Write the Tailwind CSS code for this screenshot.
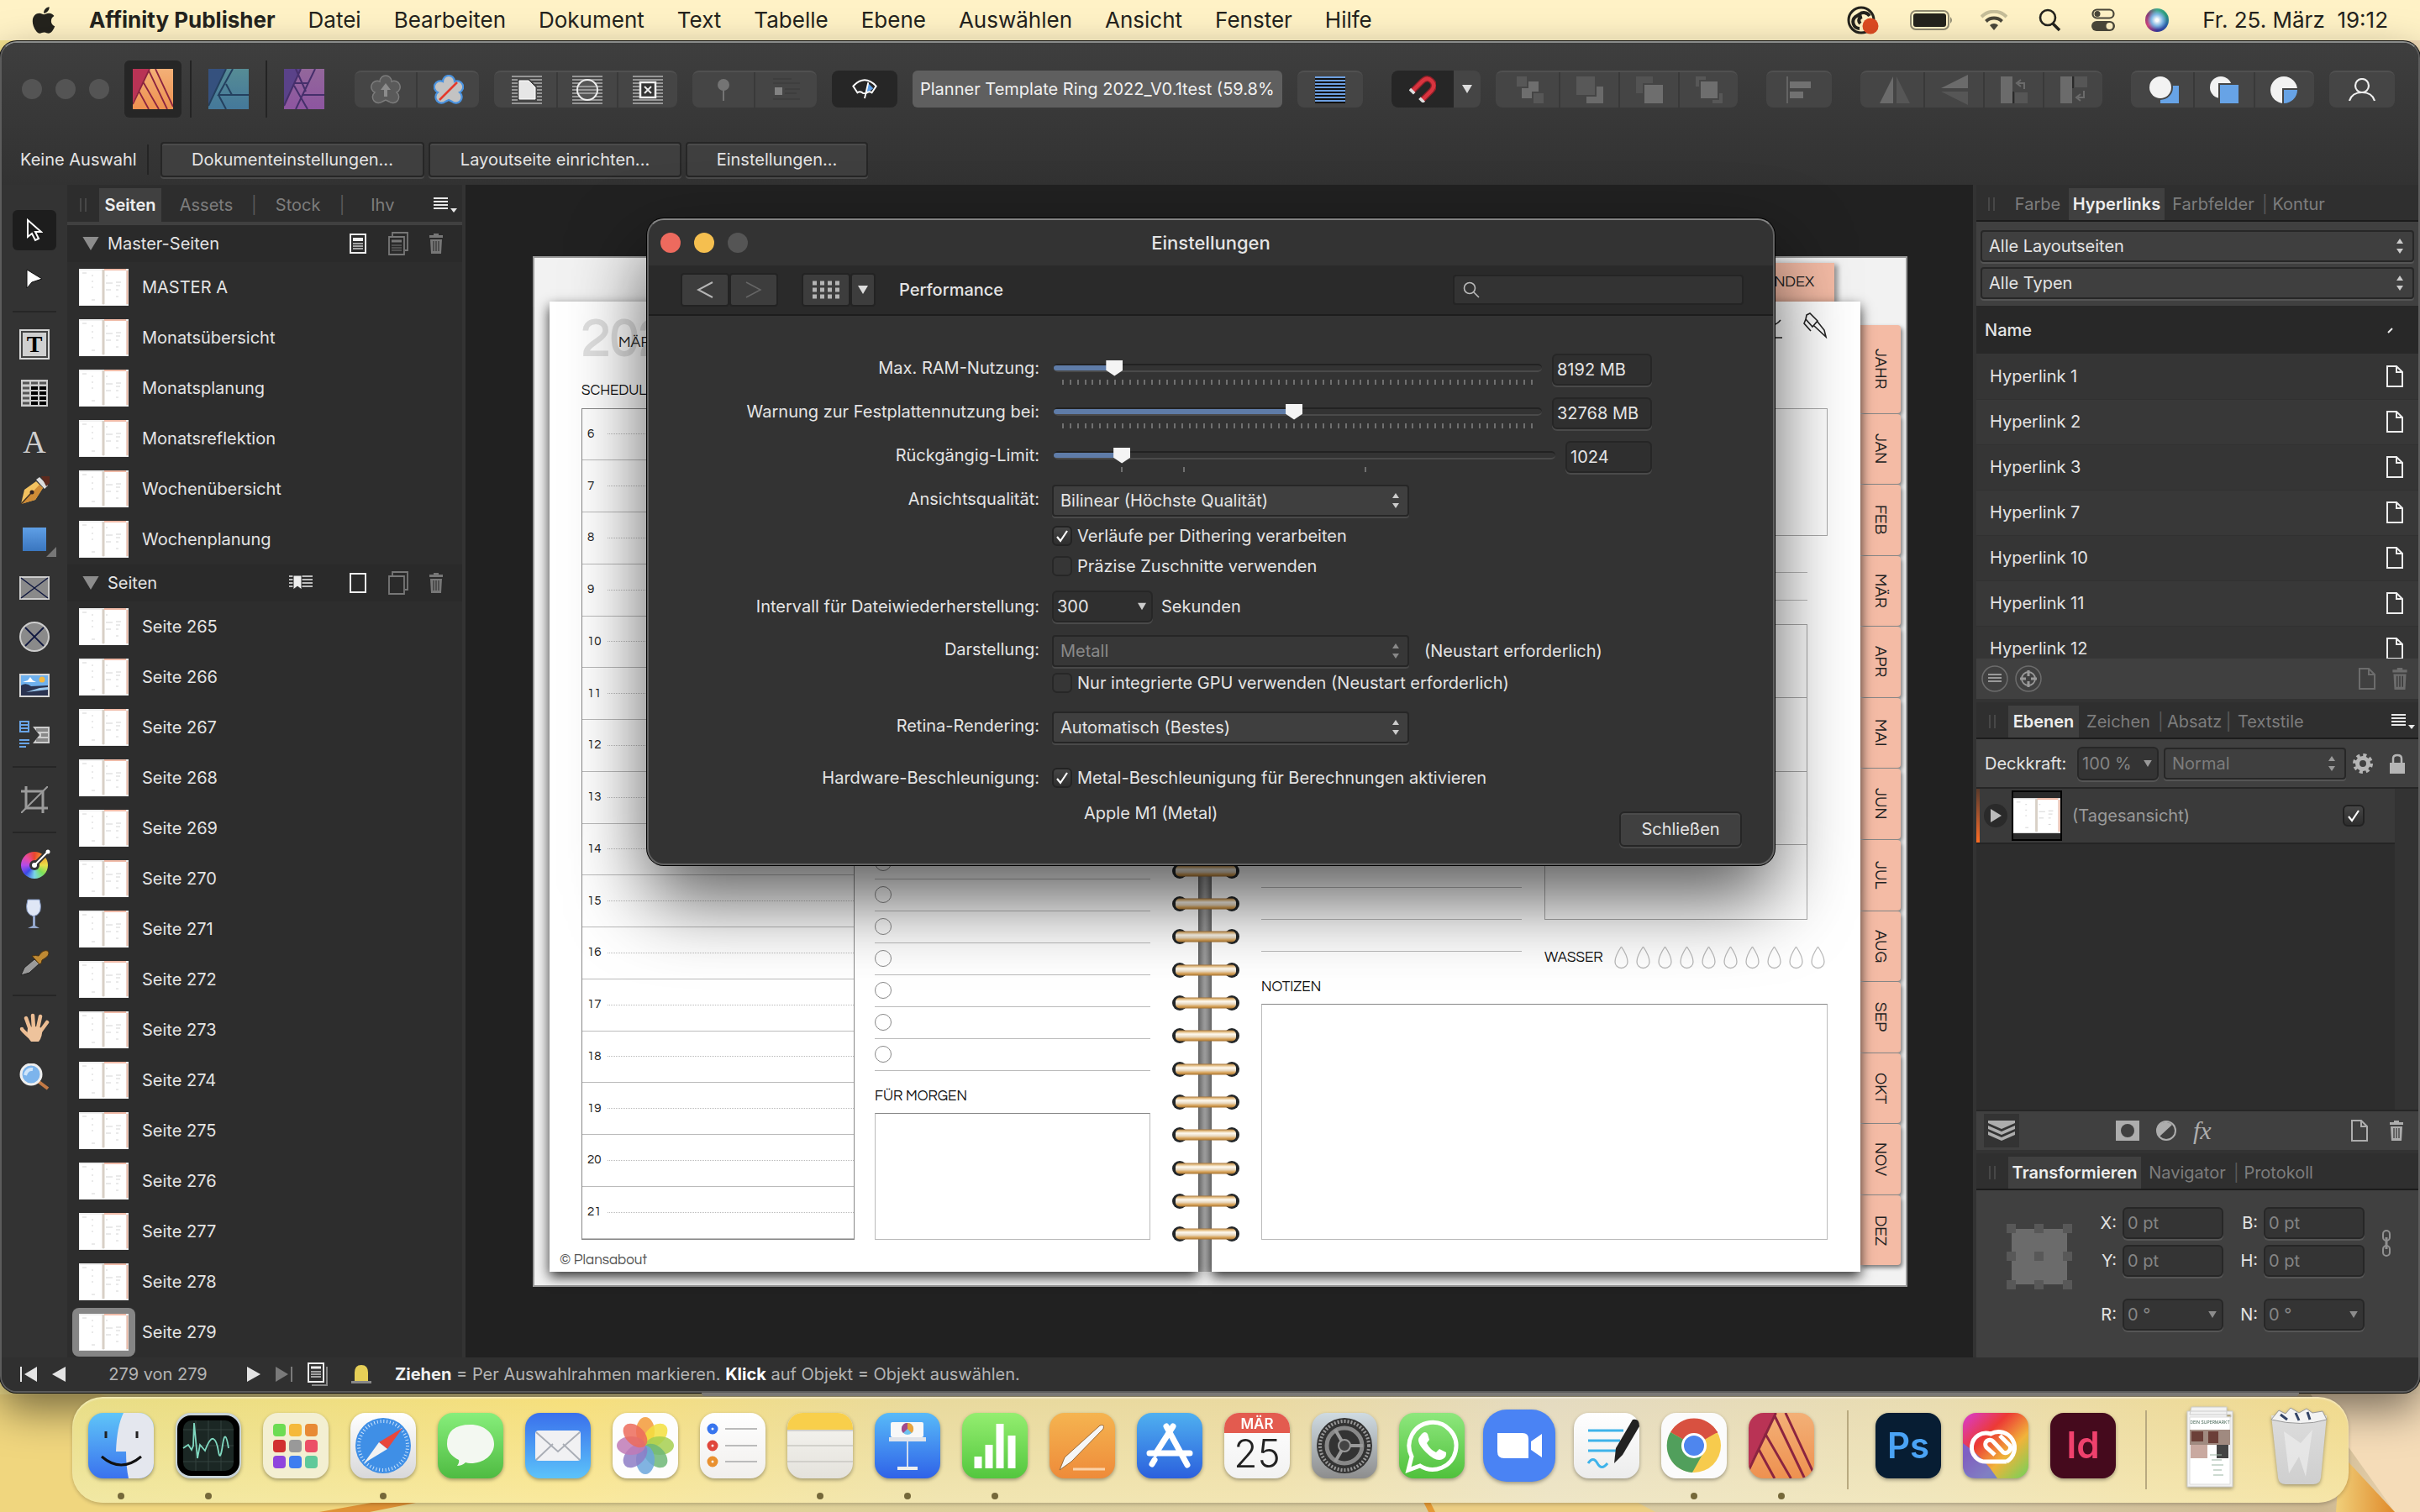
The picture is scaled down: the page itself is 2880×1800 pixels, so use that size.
<!DOCTYPE html>
<html lang="de">
<head>
<meta charset="utf-8">
<title>Affinity Publisher – Einstellungen</title>
<script src="https://cdn.jsdelivr.net/npm/@tailwindcss/browser@4"></script>
</head>
<body class="relative flex min-h-screen w-full flex-col overflow-x-hidden bg-[linear-gradient(to_right,#f6e38f_0%,#e9d98c_8%,#ddcf9c_40%,#d9cba6_80%,#cdb891_96%,#f3dcb8_100%)] font-['Inter',sans-serif] text-[20px] leading-7 text-[#e4e4e4]">

<!-- Shared symbols -->
<svg class="absolute h-0 w-0" aria-hidden="true">
  <defs>
    <linearGradient id="pubO" x1="0" y1="0" x2="0" y2="1"><stop offset="0" stop-color="#f3b077"/><stop offset="1" stop-color="#ee9150"/></linearGradient>
    <linearGradient id="desG" x1="0" y1="0" x2="0" y2="1"><stop offset="0" stop-color="#568c95"/><stop offset="1" stop-color="#44789a"/></linearGradient>
    <linearGradient id="phoG" x1="0" y1="0" x2="0" y2="1"><stop offset="0" stop-color="#93679b"/><stop offset="1" stop-color="#8d55a0"/></linearGradient>
    <linearGradient id="gold" x1="0" y1="0" x2="0" y2="1"><stop offset="0" stop-color="#a8763a"/><stop offset=".15" stop-color="#e2bd84"/><stop offset=".35" stop-color="#fffaf0"/><stop offset=".6" stop-color="#e9d9c0"/><stop offset=".8" stop-color="#d9a55c"/><stop offset="1" stop-color="#a5722f"/></linearGradient>
    <linearGradient id="dune" x1="0" y1="0" x2="1" y2="0"><stop offset="0" stop-color="#f0cf7a"/><stop offset="1" stop-color="#e08a2a"/></linearGradient>
  </defs>
  <symbol id="publisher" viewBox="0 0 48 48">
    <rect width="48" height="48" fill="url(#pubO)"/><path d="M0 0H20L0 40Z" fill="#b93355"/>
    <path d="M20 0 0 42M19 2 41 48M27 0 48 45M12 15 31 48M7 26 19 48" stroke="#8b2440" stroke-width="1.8" fill="none"/>
  </symbol>
  <symbol id="thumb" viewBox="0 0 59 44">
    <rect width="59" height="44" fill="#efefef"/><rect x="1" y="2" width="27" height="41" fill="#fff"/><rect x="30" y="2" width="26" height="41" fill="#fff"/>
    <rect x="27.500" y="1" width="3" height="41" fill="#d8d0c6"/><rect x="30" y="0" width="26" height="2" fill="#f0bba8"/><rect x="56.500" y="2" width="2" height="40" fill="#eab9a6"/>
    <path d="M4 5h5M15 8h2M15 15h2M15 22h2M15 37h4M32 8h2M32 17h8M32 25h6M44 16h6M44 20h5M44 25h3M44 33h3" stroke="#c9c9c9" stroke-width=".8"/>
  </symbol>
  <symbol id="trash" viewBox="0 0 18 26"><path d="M6 1h6v2h5v3H1V3h5zM2 8h14l-1 17H3z" fill="currentColor"/><path d="M6 10v12M9 10v12M12 10v12" stroke="#333" stroke-width="1.200"/></symbol>
  <symbol id="page" viewBox="0 0 22 28"><path d="M2 2h11l7 7v17H2zM13 2v7h7" fill="none" stroke="currentColor" stroke-width="2"/></symbol>
  <symbol id="updown" viewBox="0 0 10 22"><path d="M1 8 5 2 9 8ZM1 14 5 20 9 14Z" fill="currentColor"/></symbol>
  <symbol id="down" viewBox="0 0 12 10"><path d="M0 0H12L6 10Z" fill="currentColor"/></symbol>
  <symbol id="tick" viewBox="0 0 16 18"><path d="M2 10 6 15 14 3" fill="none" stroke="#fff" stroke-width="2.200"/></symbol>
  <symbol id="menu" viewBox="0 0 28 20"><path d="M0 2h17M0 6h17M0 10h17M0 14h17" stroke="#e8e8e8" stroke-width="2"/><path d="M20 14h8l-4 5z" fill="#e8e8e8"/></symbol>
  <symbol id="grip" viewBox="0 0 10 18"><path d="M2 1v16M8 1v16" stroke="#505050" stroke-width="1.500"/></symbol>
</svg>

<!-- Desktop picture, visible round the dock -->
<svg class="absolute inset-x-0 bottom-0 h-[140px] w-full" viewBox="0 0 2880 140" preserveAspectRatio="none" aria-hidden="true">
  <path d="M0 0H120L480 120 415 140H0z" fill="#f0d67e"/><path d="M380 140 470 124 520 124 440 140z" fill="#df9236"/>
  <path d="M1690 120h20l20 20h-30z" fill="#e59a35"/><path d="M1700 124h240l30 16h-262z" fill="#ecce84"/>
  <path d="M2750 0h130v140h-30z" fill="#f5dcb8"/><path d="M2785 70 2850 140H2780z" fill="url(#dune)"/>
</svg>

<!-- Menu bar -->
<header class="relative flex h-12 shrink-0 items-center bg-[#fff2c6] px-[38px] text-[26px] text-[#24231d]">
  <svg class="mr-10 h-9 w-7" viewBox="0 0 384 512" fill="#24231d"><path d="M318.700 268.700c-.2-36.700 16.400-64.400 50-84.800-18.800-26.900-47.200-41.700-84.700-44.600-35.500-2.800-74.300 20.700-88.500 20.700-15 0-49.400-19.700-76.400-19.700C63.300 141.200 4 184.800 4 273.500q0 39.300 14.400 81.200c12.800 36.700 59 126.700 107.200 125.200 25.200-.6 43-17.900 75.800-17.900 31.800 0 48.300 17.900 76.400 17.900 48.600-.7 90.400-82.500 102.600-119.300-65.200-30.700-61.700-90-61.700-91.900zm-56.600-164.200c27.300-32.400 24.800-61.900 24-72.500-24.100 1.400-52 16.400-67.900 34.900-17.500 19.800-27.800 44.300-25.600 71.900 26.100 2 49.900-11.400 69.500-34.300z"/></svg>
  <nav class="flex items-center gap-[39px]">
    <a href="#" class="font-bold">Affinity Publisher</a><a href="#">Datei</a><a href="#">Bearbeiten</a><a href="#">Dokument</a><a href="#">Text</a><a href="#">Tabelle</a><a href="#">Ebene</a><a href="#">Auswählen</a><a href="#">Ansicht</a><a href="#">Fenster</a><a href="#">Hilfe</a>
  </nav>
  <div class="ml-auto flex items-center">
    <svg class="mr-9 h-9 w-11" viewBox="0 0 44 36" fill="none"><circle cx="22" cy="18" r="15" fill="#fff2c6" stroke="#24231d" stroke-width="3"/><path d="M20 28a8 8 0 0 1-5-14l5-3a8 8 0 0 1 12 2M21 22c-3-3-2-7 2-8" stroke="#24231d" stroke-width="4"/><circle cx="33" cy="25" r="9.500" fill="#dd4b22"/></svg>
    <svg class="mr-8 h-6 w-[52px]" viewBox="0 0 52 24"><rect x="1" y="1" width="45" height="22" rx="6" fill="none" stroke="#8f8a72" stroke-width="2"/><rect x="4" y="4" width="39" height="16" rx="3" fill="#24231d"/><path d="M48 8q4 4 0 8z" fill="#8f8a72"/></svg>
    <svg class="mr-9 h-6 w-8" viewBox="0 0 32 24" fill="none"><path d="M1 8a21 21 0 0 1 30 0" stroke="#c5bd99" stroke-width="4"/><path d="M6.500 13.500a13.500 13.500 0 0 1 19 0" stroke="#4a473a" stroke-width="4"/><path d="m11 18 5 6 5-6a7 7 0 0 0-10 0" fill="#4a473a"/></svg>
    <svg class="mr-9 h-7 w-7" viewBox="0 0 28 28" fill="none" stroke="#24231d"><circle cx="12" cy="11" r="9" stroke-width="2.600"/><path d="m18 18 8 8" stroke-width="3.500"/></svg>
    <svg class="mr-9 h-7 w-7" viewBox="0 0 28 28"><rect x="1.500" y="1.500" width="25" height="10" rx="5" fill="none" stroke="#4a473a" stroke-width="2.200"/><circle cx="7" cy="6.500" r="3.500" fill="#4a473a"/><rect y="15" width="28" height="12" rx="6" fill="#4a473a"/><circle cx="21.500" cy="21" r="4" fill="#fff2c6"/></svg>
    <span class="mr-10 h-7 w-7 rounded-full bg-[radial-gradient(circle_at_50%_50%,#ffffff_8%,#7fb8e6_35%,transparent_60%),conic-gradient(#3fa98c,#2a9a7a,#2b5fae,#39379c,#d2457d,#8d3c78,#3fa98c)]"></span>
    <time class="whitespace-pre">Fr. 25. März  19:12</time>
  </div>
</header>

<!-- Application window -->
<main class="relative mt-px shrink-0 overflow-hidden rounded-[20px] border-2 border-[#5c5c5c] border-t-[#8a8c8b] bg-[#333] shadow-[0_0_0_1px_#111,0_20px_50px_#00000080]">
  <div class="bg-linear-to-b from-[#3e3e3e] to-[#323232] pt-[21px] pb-[9px]">
    <div id="toolbar" class="flex h-[68px] items-center gap-[18px] pr-[28px] pl-6">
      <div class="flex items-center">
        <span class="h-6 w-6 rounded-full bg-[#545454]"></span><span class="ml-4 h-6 w-6 rounded-full bg-[#545454]"></span><span class="ml-4 h-6 w-6 rounded-full bg-[#545454]"></span>
        <button aria-label="Publisher" class="ml-[18px] flex h-[68px] w-[68px] items-center justify-center rounded-md bg-[#262626]"><svg class="h-12 w-12"><use href="#publisher"/></svg></button>
        <span class="mx-[10px] h-[68px] w-0.5 bg-[#242424]"></span>
        <button aria-label="Designer" class="flex w-[68px] justify-center"><svg class="h-12 w-12" viewBox="0 0 48 48"><rect width="48" height="48" fill="url(#desG)"/><path d="M0 0h21L0 44z" fill="#35517e"/><path d="M21 0 0 44M29 0 12 31h36M21 18l7 13M12 31l9 17" stroke="#24405f" stroke-width="2" fill="none"/></svg></button>
        <span class="mx-[10px] h-[68px] w-0.5 bg-[#242424]"></span>
        <button aria-label="Photo" class="flex w-[68px] justify-center"><svg class="h-12 w-12" viewBox="0 0 48 48"><rect width="48" height="48" fill="url(#phoG)"/><path d="M0 0h20L0 44z" fill="#5a4289"/><path d="M20 0 0 44M37 0 22 31h26M12 17h16M14 0l12 27M22 31 14 48M12 20l16 28" stroke="#452f6b" stroke-width="2" fill="none"/></svg></button>
      </div>
      <div class="ml-2 flex h-11 w-[148px] overflow-hidden rounded-lg border-t-2 border-[#505050] bg-[#454545] *:flex *:flex-1 *:items-center *:justify-center">
        <button aria-label="Standard"><svg class="h-9 w-9" viewBox="0 0 36 36"><path d="M18 1a7 7 0 0 1 7 7 7 7 0 0 1 6 13 7 7 0 0 1-9 11l-4-2-4 2a7 7 0 0 1-9-11A7 7 0 0 1 11 8a7 7 0 0 1 7-7" fill="#5a5a5a" stroke="#7c7c7c" stroke-width="1.500"/><path d="m18 10 6 8h-4v8h-4v-8h-4z" fill="#8c8c8c"/></svg></button>
        <button aria-label="Synchronisieren" class="border-l-2 border-[#393939]"><svg class="h-9 w-9" viewBox="0 0 36 36"><path d="M18 1a7 7 0 0 1 7 7 7 7 0 0 1 6 13 7 7 0 0 1-9 11l-4-2-4 2a7 7 0 0 1-9-11A7 7 0 0 1 11 8a7 7 0 0 1 7-7" fill="#c3c3c3" stroke="#4a93e0" stroke-width="2.200"/><path d="m28 9-21 21" stroke="#e5392b" stroke-width="2.500"/></svg></button>
      </div>
      <div class="flex h-11 w-[218px] overflow-hidden rounded-lg border-t-2 border-[#505050] bg-[#454545] pl-1 *:flex *:flex-1 *:items-center *:justify-center">
        <button aria-label="Textumfluss"><svg class="h-9 w-9" viewBox="0 0 36 36"><path d="M0 2h36M0 6h36M0 10h36M0 14h36M0 18h36M0 22h36M0 26h36M0 30h36M0 34h36" stroke="#969696" stroke-width="2"/><path d="M7 5h14l9 9v17H7z" fill="#454545"/><path d="M9 7h11l8 8v14H9z" fill="#e6e6e6" stroke="#fff"/></svg></button>
        <button aria-label="Kontur umfließen" class="border-l-2 border-[#393939]"><svg class="h-9 w-9" viewBox="0 0 36 36"><path d="M0 2h36M0 6h36M0 10h36M0 14h36M0 18h36M0 22h36M0 26h36M0 30h36M0 34h36" stroke="#969696" stroke-width="2"/><circle cx="18" cy="18" r="12" fill="#555" stroke="#eee" stroke-width="2"/><path d="M8 14h20M7 18h22M8 22h20" stroke="#969696" stroke-width="2"/></svg></button>
        <button aria-label="Kein Umfluss" class="border-l-2 border-[#393939]"><svg class="h-9 w-9" viewBox="0 0 36 36"><path d="M0 2h36M0 6h36M0 10h36M0 14h36M0 18h36M0 22h36M0 26h36M0 30h36M0 34h36" stroke="#969696" stroke-width="2"/><rect x="9" y="9" width="18" height="18" fill="#333" stroke="#eee" stroke-width="2.500"/><path d="m14 14 8 8m0-8-8 8" stroke="#eee" stroke-width="2"/></svg></button>
      </div>
      <div class="flex h-11 w-[148px] overflow-hidden rounded-lg border-t-2 border-[#505050] bg-[#454545] *:flex *:flex-1 *:items-center *:justify-center">
        <button aria-label="Anker"><svg class="h-7 w-5" viewBox="0 0 20 28"><circle cx="10" cy="8" r="7" fill="#747474"/><path d="M10 14v13" stroke="#747474" stroke-width="2"/></svg></button>
        <button aria-label="Inline" class="border-l-2 border-[#393939]"><svg class="h-8 w-8" viewBox="0 0 32 32"><path d="M0 3h22M0 8h32M14 15h18M14 20h14M0 27h32" stroke="#3e3e3e" stroke-width="2"/><rect x="2" y="13" width="9" height="9" fill="#828282"/></svg></button>
      </div>
      <button aria-label="Vorschau" class="flex h-11 w-[78px] items-center justify-center rounded-lg bg-[#262626]"><svg class="h-6 w-8" viewBox="0 0 36 28" fill="none"><path d="m20 18 3-12 7 7-5 4z" fill="#5fa0e8"/><path d="M2 10q16-17 32 0l-6 9q-4-3-8 1h-4q-4-4-8-1zM18 27l5-22" stroke="#fff" stroke-width="2.200"/></svg></button>
      <div class="h-11 min-w-0 flex-1 rounded-md bg-[#5f5f5f] px-[9px] leading-[44px] whitespace-nowrap text-[#f0f0f0]">Planner Template Ring 2022_V0.1test (59.8%</div>
      <button aria-label="Grundlinienraster" class="flex h-11 w-[78px] items-center justify-center rounded-lg border-t-2 border-[#505050] bg-[#454545]"><svg class="h-8 w-9" viewBox="0 0 36 32"><path d="M0 3h36M0 7h36M0 11h36M0 15h36M0 19h36M0 23h36M0 27h36M0 31h36" stroke="#111" stroke-width="2"/><path d="M0 1h36M0 5h36M0 9h36M0 13h36M0 17h36M0 21h36M0 25h36M0 29h36" stroke="#6d9fe0" stroke-width="2"/></svg></button>
      <div class="ml-4 flex h-11 overflow-hidden rounded-lg bg-[#454545]">
        <button aria-label="Magnet" class="flex w-[74px] items-center justify-center bg-[#262626]"><svg class="h-8 w-8" viewBox="0 0 36 36" fill="none"><path d="M4 21 17 8Q24 1 30 7t0 13L17 33" stroke="#8e2028" stroke-width="8"/><path d="M4 21 17 8Q24 1 30 7t0 13L17 33" stroke="#d8343f" stroke-width="5"/><path d="m1 18 6 6M14 30l6 6" stroke="#ddd" stroke-width="4"/></svg></button>
        <button aria-label="Magnetoptionen" class="flex w-8 items-center justify-center text-[#ddd]"><svg class="h-2.5 w-3"><use href="#down"/></svg></button>
      </div>
      <div class="flex h-11 w-[288px] overflow-hidden rounded-lg border-t-2 border-[#505050] bg-[#454545] pl-[6px] *:flex *:flex-1 *:items-center *:justify-center">
        <button aria-label="Nach hinten"><svg class="h-8 w-8" viewBox="0 0 32 32"><path d="M0 0h12v12H0zM20 20h12v12H20z" fill="#575757"/><path d="M6 14V26h12V18h8V6H14v8z" fill="#6e6e6e"/></svg></button>
        <button aria-label="Eins nach hinten" class="border-l-2 border-[#393939]"><svg class="h-8 w-8" viewBox="0 0 32 32"><path d="M0 0h22v22H0z" fill="#585858"/><path d="M24 12h8v20H12v-8h12z" fill="#6a6a6a"/></svg></button>
        <button aria-label="Eins nach vorne" class="border-l-2 border-[#393939]"><svg class="h-8 w-8" viewBox="0 0 32 32"><path d="M0 0h20v8H8v12H0z" fill="#535353"/><path d="M10 10h22v22H10z" fill="#6e6e6e"/></svg></button>
        <button aria-label="Nach vorne" class="border-l-2 border-[#393939]"><svg class="h-8 w-8" viewBox="0 0 32 32"><path d="M0 0h12v4H4v8H0zM28 20h4v12H20v-4h8z" fill="#575757"/><path d="M6 6h20v20H6z" fill="#6e6e6e"/></svg></button>
      </div>
      <button aria-label="Ausrichten" class="ml-4 flex h-11 w-[78px] items-center justify-center rounded-lg border-t-2 border-[#505050] bg-[#454545]"><svg class="h-8 w-8" viewBox="0 0 32 32"><path d="M2 0v32" stroke="#636363" stroke-width="2"/><path d="M5 6h25v8H5zM5 18h16v8H5z" fill="#717171"/></svg></button>
      <div class="ml-4 flex h-11 w-[288px] overflow-hidden rounded-lg border-t-2 border-[#505050] bg-[#454545] pl-[6px] *:flex *:flex-1 *:items-center *:justify-center">
        <button aria-label="Horizontal spiegeln"><svg class="h-8 w-9" viewBox="0 0 36 32"><path d="M16 0v32H0z" fill="#6b6b6b"/><path d="M20 0v32h16z" fill="#565656"/></svg></button>
        <button aria-label="Vertikal spiegeln" class="border-l-2 border-[#393939]"><svg class="h-9 w-8" viewBox="0 0 32 36"><path d="M32 0v16H0z" fill="#6b6b6b"/><path d="M32 36V20H0z" fill="#565656"/></svg></button>
        <button aria-label="Links drehen" class="border-l-2 border-[#393939]"><svg class="h-8 w-8" viewBox="0 0 32 32"><path d="M0 0h14v32H0z" fill="#6b6b6b"/><path d="M17 19h15v13H17z" fill="#565656"/><path d="M15 18v14" stroke="#222" stroke-width="1.500"/><path d="M28 15V8h-7M24 4l-5 4 5 4" fill="none" stroke="#6b6b6b" stroke-width="2"/></svg></button>
        <button aria-label="Rechts drehen" class="border-l-2 border-[#393939]"><svg class="h-8 w-8" viewBox="0 0 32 32"><path d="M0 0h14v32H0z" fill="#6b6b6b"/><path d="M17 0h15v13H17z" fill="#565656"/><path d="M15 0v14" stroke="#222" stroke-width="1.500"/><path d="M28 17v8h-7M24 21l-5 4 5 4" fill="none" stroke="#6b6b6b" stroke-width="2"/></svg></button>
      </div>
      <div class="ml-4 flex h-11 w-[218px] overflow-hidden rounded-lg border-t-2 border-[#505050] bg-[#454545] pl-1 *:flex *:flex-1 *:items-center *:justify-center">
        <button aria-label="Addieren"><svg class="h-8 w-9" viewBox="0 0 36 32"><path d="M14 11h22v21H14z" fill="#67a3e6"/><circle cx="14" cy="13" r="15" fill="#454545"/><circle cx="14" cy="13" r="13" fill="#f2f2f2"/></svg></button>
        <button aria-label="Subtrahieren" class="border-l-2 border-[#393939]"><svg class="h-8 w-9" viewBox="0 0 36 32"><circle cx="14" cy="13" r="13" fill="#f2f2f2"/><path d="M11 8h24v24H11z" fill="#454545"/><path d="M13 10h22v22H13z" fill="#67a3e6"/></svg></button>
        <button aria-label="Schneiden" class="border-l-2 border-[#393939]"><svg class="h-8 w-9" viewBox="0 0 36 32"><circle cx="17" cy="16" r="16" fill="#f2f2f2"/><path d="M15 14h21v18H15z" fill="#454545"/><path d="M17 16h16a16 16 0 0 1-16 16z" fill="#67a3e6"/></svg></button>
      </div>
      <button aria-label="Konto" class="flex h-11 w-[78px] items-center justify-center rounded-lg border-t-2 border-[#505050] bg-[#454545]"><svg class="h-7 w-8" viewBox="0 0 32 28" fill="none" stroke="#eee" stroke-width="2.200"><circle cx="16" cy="9" r="8"/><path d="M1 27q3-10 15-10t15 10"/></svg></button>
    </div>
    <div class="mt-[29px] flex h-[42px] items-center">
      <span class="w-[149px] pl-[22px] whitespace-nowrap">Keine Auswahl</span>
      <span class="mr-[14px] ml-6 h-9 w-0.5 bg-[#242424]"></span>
      <div class="flex gap-[5px] *:h-[42px] *:rounded-sm *:border-2 *:border-[#262626] *:bg-[#3f3f3f] *:text-center *:shadow-[0_2px_0_#4a4a4a,inset_0_2px_0_#4b4b4b]">
        <button class="w-[314px]">Dokumenteinstellungen...</button><button class="w-[301px]">Layoutseite einrichten...</button><button class="w-[217px]">Einstellungen...</button>
      </div>
    </div>
  </div>

  <div class="flex">
    <!-- Tool strip -->
    <aside class="w-[78px] shrink-0 bg-[#333] pt-[25px]">
      <div class="flex flex-col items-center *:flex *:h-[58px] *:w-[52px] *:shrink-0 *:items-center *:justify-center">
        <button aria-label="Verschieben"><span class="flex h-12 w-[52px] items-center justify-center rounded-md bg-[#1d1d1d]"><svg class="h-7 w-5" viewBox="0 0 20 28"><path d="M2 2v20l5-4 4 8 4-2-4-8h7z" fill="#1d1d1d" stroke="#fff" stroke-width="2"/></svg></span></button>
        <button aria-label="Knoten"><svg class="h-6 w-5" viewBox="0 0 20 24"><path d="M1 1v22l6-7 12-4z" fill="#fff" stroke="#111"/></svg></button>
        <div class="!h-[20px]"><span class="h-0.5 w-full bg-[#262626]"></span></div>
        <button aria-label="Textrahmen"><span class="flex h-9 w-9 items-center justify-center border-2 border-[#d8d8d8] bg-[#444]"><span class="flex h-7 w-7 items-center justify-center bg-[#d0d0d0] font-['Liberation_Serif',serif] text-[28px] font-bold text-black">T</span></span></button>
        <button aria-label="Tabelle"><svg class="h-8 w-8" viewBox="0 0 32 32"><path d="M0 0h32v32H0z" fill="#ccc"/><path d="M2 4h8M12 4h8M22 4h8M2 10h8M2 16h8M2 22h8M2 28h8" stroke="#555" stroke-width="3"/><path d="M12 10h8M22 10h8M12 16h8M22 16h8M12 22h8M22 22h8M12 28h8M22 28h8" stroke="#000" stroke-width="4"/></svg></button>
        <button aria-label="Grafiktext" class="font-['Liberation_Serif',serif] text-[38px] text-[#cfcfcf]">A</button>
        <button aria-label="Zeichenstift"><svg class="h-9 w-9" viewBox="0 0 36 36"><path d="M2 34 6 17 20 7l8 8-9 14z" fill="#f3c260"/><path d="m2 34 17-5 9-14-4-4z" fill="#cf8b36"/><path d="m2 34 12-13" stroke="#432" stroke-width="1.500"/><circle cx="15" cy="20" r="2.500" fill="#322"/><path d="m20 5 10 11 4-4L24 2z" fill="#ddd"/><path d="M26 1h10v8l-4 4z" fill="#5c2a1e"/></svg></button>
        <button aria-label="Rechteck" class="relative"><span class="h-7 w-7 bg-linear-to-b from-[#5f9fe6] to-[#3a76bf]"></span><svg class="absolute right-0 bottom-2 h-3 w-3" viewBox="0 0 12 12"><path d="M12 0v12H0z" fill="#777"/></svg></button>
        <button aria-label="Bildrahmen rechteckig"><svg class="h-7 w-9" viewBox="0 0 36 28"><path d="M1 1h34v26H1z" fill="#8a8a8a" stroke="#ccc" stroke-width="2"/><path d="m2 2 32 24m0-24L2 26" stroke="#101840" stroke-width="1.500"/></svg></button>
        <button aria-label="Bildrahmen elliptisch"><svg class="h-9 w-9" viewBox="0 0 36 36"><circle cx="18" cy="18" r="17" fill="#8a8a8a" stroke="#ccc" stroke-width="2"/><path d="m7 7 22 22m0-22L7 29" stroke="#101840" stroke-width="1.800"/></svg></button>
        <button aria-label="Bild platzieren"><svg class="h-7 w-9" viewBox="0 0 36 28"><path d="M1 1h34v26H1z" fill="#6fb1ee" stroke="#d8d8d8" stroke-width="2"/><path d="M2 14q6-4 12 1l20-1v12H2z" fill="#2a3350"/><path d="m8 22 16-5 10-1v3z" fill="#9cc9ee"/><path d="m4 10 6-2 3-4 3 4 4 2z" fill="#fff"/><circle cx="27" cy="7" r="3.500" fill="#f4b942"/></svg></button>
        <button aria-label="Datenmerge"><svg class="h-8 w-9" viewBox="0 0 36 32"><path d="M1 1h10v12H1zM1 5h10M1 9h10M0 23h12M0 27h12M0 31h8" fill="none" stroke="#69a5e8" stroke-width="2"/><path d="M16 7h20v20H16l8-10z" fill="#ccc"/><path d="M20 11h14M26 17h8M20 23h14" stroke="#888" stroke-width="4"/></svg></button>
        <div class="!h-[20px]"><span class="h-0.5 w-full bg-[#262626]"></span></div>
        <button aria-label="Vektorzuschnitt"><svg class="h-8 w-8" viewBox="0 0 32 32" fill="none" stroke="#9b9b9b" stroke-width="3"><path d="M6 0v26h26M0 6h26v26"/><path d="M0 32 32 0" stroke-width="2"/></svg></button>
        <div class="!h-[20px]"><span class="h-0.5 w-full bg-[#262626]"></span></div>
        <button aria-label="Füllung"><span class="relative h-8 w-8 rounded-full bg-[conic-gradient(#e8452f,#f2a02b,#e8e04a,#7be05a,#7ad6e8,#3a4be8,#b44be8,#e84ba0,#e8452f)]"><span class="absolute top-[10px] left-[10px] h-3 w-3 rounded-full bg-[#333]"></span><svg class="absolute -top-1 left-[12px] h-6 w-6" viewBox="0 0 24 24"><path d="M4 20 20 4" stroke="#333" stroke-width="6"/><path d="M4 20 20 4" stroke="#fff" stroke-width="2"/><circle cx="4" cy="20" r="3" fill="#fff"/><circle cx="20" cy="4" r="2.500" fill="#fff"/></svg></span></button>
        <button aria-label="Transparenz"><svg class="h-9 w-6" viewBox="0 0 24 36"><path d="M4 1h14q5 17-7 20Q-1 18 4 1" fill="#dfe6f5" stroke="#7e93bd"/><path d="M10 21h3v11l5 3H4l6-3z" fill="#93a6cc"/></svg></button>
        <button aria-label="Pipette"><svg class="h-8 w-9" viewBox="0 0 36 32"><path d="m2 31 4-9 12-10 6 5-12 11z" fill="#9a9a9a" stroke="#222"/><path d="M15 8q5-1 8 0 5-8 11-6 4 5-7 11 0 4-3 5z" fill="#c08a33" stroke="#4a3210"/></svg></button>
        <div class="!h-[20px]"><span class="h-0.5 w-full bg-[#262626]"></span></div>
        <button aria-label="Hand"><svg class="h-9 w-9" viewBox="0 0 36 36"><path d="M12 28Q3 20 3 19M13 20 8 6M17 18 16 3M22 18l3-14M25 22l8-11" stroke="#ecbd93" stroke-width="4.500" stroke-linecap="round" fill="none"/><path d="M10 18q8-4 17 0 1 10-4 16h-9q-6-6-4-16" fill="#eec39c"/></svg></button>
        <button aria-label="Zoom"><svg class="h-8 w-9" viewBox="0 0 36 32"><path d="m22 21 12 9" stroke="#c47a45" stroke-width="4"/><circle cx="14" cy="13" r="12" fill="#7cb4ec" stroke="#eee" stroke-width="3"/><path d="M7 14q2-8 9-7" stroke="#cfe5fa" stroke-width="4" fill="none"/></svg></button>
      </div>
    </aside>

    <!-- Pages panel -->
    <section class="w-[474px] shrink-0 border-r-4 border-[#333] bg-[#2d2d2d]">
      <div class="flex h-[48px] items-end border-b-4 border-[#404040] bg-[#2d2d2d] pt-1 text-[#7d7d7d] *:flex *:h-full *:items-center">
        <span class="w-[38px] justify-center"><svg class="h-[18px] w-2.5"><use href="#grip"/></svg></span>
        <button class="w-[74px] justify-center bg-[#404040] font-semibold text-[#eee]">Seiten</button>
        <button class="w-[107px] justify-center">Assets</button><span class="text-[#5a5a5a]">|</span>
        <button class="w-[98px] justify-center">Stock</button><span class="text-[#5a5a5a]">|</span>
        <button class="w-[90px] justify-center">Ihv</button>
        <button aria-label="Menü" class="ml-auto pr-[6px]"><svg class="h-5 w-7"><use href="#menu"/></svg></button>
      </div>
      <div class="flex h-11 items-center bg-[#2a2a2a] pr-[22px] pl-[18px]">
        <svg class="h-4 w-5 text-[#8c8c8c]" ><use href="#down"/></svg><span class="ml-2.5">Master-Seiten</span>
        <button aria-label="Neuer Master" class="ml-auto"><svg class="h-6 w-5" viewBox="0 0 20 24"><path d="M1 1h18v22H1z" fill="none" stroke="#eee" stroke-width="2"/><path d="M4 7h12" stroke="#eee" stroke-width="4"/><path d="M4 12h12M4 15h12M4 18h12" stroke="#ccc" stroke-width="1.500"/></svg></button>
        <button aria-label="Duplizieren" class="ml-[26px]"><svg class="h-7 w-6" viewBox="0 0 24 28" fill="none" stroke="#777"><path d="M1 6h18v21H1zM5 5V1h18v21h-3" stroke-width="1.800"/><path d="M4 11h12" stroke-width="3"/><path d="M4 16h12M4 19h12M4 22h12"/></svg></button>
        <button aria-label="Löschen" class="ml-6 text-[#777]"><svg class="h-[26px] w-[18px]"><use href="#trash"/></svg></button>
      </div>
      <ul id="masters"></ul>
      <div class="flex h-11 items-center bg-[#2a2a2a] pr-[22px] pl-[18px]">
        <svg class="h-4 w-5 text-[#8c8c8c]"><use href="#down"/></svg><span class="ml-2.5">Seiten</span>
        <button aria-label="Abschnitte" class="ml-auto"><svg class="h-5 w-7" viewBox="0 0 28 20"><path d="M0 2h28M0 6h28M0 10h28M0 14h28" stroke="#bbb" stroke-width="1.800"/><path d="M5 1h10v17l-5-4-5 4z" fill="#eee" stroke="#2a2a2a"/></svg></button>
        <button aria-label="Neue Seite" class="ml-11"><svg class="h-6 w-5" viewBox="0 0 20 24"><path d="M1 1h18v22H1z" fill="none" stroke="#eee" stroke-width="2"/></svg></button>
        <button aria-label="Duplizieren" class="ml-[26px]"><svg class="h-7 w-6" viewBox="0 0 24 28" fill="none" stroke="#777" stroke-width="1.800"><path d="M1 6h18v21H1zM5 5V1h18v21h-3"/></svg></button>
        <button aria-label="Löschen" class="ml-6 text-[#777]"><svg class="h-[26px] w-[18px]"><use href="#trash"/></svg></button>
      </div>
      <ul id="pages"></ul>
    </section>

    <!-- Canvas -->
    <section class="flex min-w-0 flex-1 items-center justify-center overflow-hidden bg-[#212121] pl-0.5 text-[#222]">
      <div class="relative flex h-[1227px] w-[1636px] shrink-0 border-2 border-[#999] bg-[#f2f2f2] pt-[52px] pl-[18px] font-['Questrial','Inter',sans-serif] text-[17px] leading-5">
        <div class="absolute top-[6px] right-[85px] h-12 w-[128px] bg-[#f4bba5] pr-6 text-right text-[18px] leading-[46px] shadow-[4px_2px_6px_#00000066]">INDEX</div>
        <!-- Left page -->
        <div class="relative h-[1155px] w-[772px] bg-white pl-[38px] shadow-[0_6px_14px_#000000cc]">
          <div class="flex h-[127px] flex-col justify-between pt-4 pb-[11px]">
            <div class="text-[62px] leading-[58px] font-extrabold text-[#e0e0e0]">2022</div>
            <div class="font-semibold text-[#111]">SCHEDULE</div>
          </div>
          <span class="absolute top-[39px] left-[82px] text-[18px]">MÄRZ</span>
          <div class="flex gap-6">
            <div id="hours" class="grid h-[990px] w-[325px] grid-rows-16 border border-[#888]"></div>
            <div class="flex h-[990px] w-[328px] flex-col justify-end">
              <div id="todos"></div>
              <h3 class="pt-5 pb-2.5 font-medium text-[#111]">FÜR MORGEN</h3>
              <div class="h-[151px] border border-[#bbb] border-t-[#888]"></div>
            </div>
          </div>
          <div class="mt-[14px] -ml-[26px] text-[17px] text-[#555]">© Plansabout</div>
        </div>
        <!-- Spine -->
        <div class="h-[1155px] w-4 bg-linear-to-r from-[#a3a3a3] via-[#c4c4c4] to-[#a3a3a3]"></div>
        <!-- Right page -->
        <div class="relative h-[1155px] w-[772px] bg-white pr-[39px] pl-[59px] shadow-[0_6px_14px_#000000cc]">
          <div class="flex h-[127px] items-start justify-end pt-3">
            <svg class="h-8 w-20" viewBox="0 0 80 32" fill="none" stroke="#222" stroke-width="1.600"><path d="M6 8q8 14 18 2M10 31h16"/><path d="m55 4 4-2 9 9-6 7-8-9zM64 17l14 13-2-8-8-10M54 9l-2 5 8 9"/></svg>
          </div>
          <div class="h-[152px] border border-[#aaa]"></div>
          <div class="flex h-[457px] justify-between pr-6">
            <div class="flex w-[310px] flex-col justify-end *:h-[38px] *:border-b *:border-[#bbb]"><div></div><div></div><div></div></div>
            <div class="w-[313px]">
              <div class="h-11 border-b border-[#bbb]"></div><div class="h-[33px] border-b border-[#bbb]"></div>
              <div class="mt-7 grid h-[352px] grid-rows-4 border border-[#aaa] *:border-b *:border-[#aaa]"><div></div><div></div><div></div></div>
            </div>
          </div>
          <div class="flex h-[90px]">
            <div class="h-[38px] w-[310px] border-b border-[#bbb]"></div>
            <div class="ml-[27px] flex h-[90px] items-center gap-[12px] font-medium whitespace-nowrap text-[#111]">WASSER <div id="drops" class="flex gap-[7px]"></div></div>
          </div>
          <h3 class="-mt-[20px] h-[30px] font-medium text-[#111]">NOTIZEN</h3>
          <div class="h-[281px] border border-[#bbb] border-t-[#888]"></div>
        </div>
        <!-- Month tabs -->
        <div id="tabs" class="mt-[28px] flex h-[1120px] w-12 flex-col gap-px"></div>
        <!-- Ring binding -->
        <div id="rings" class="absolute top-[710px] left-[759px] flex h-[472px] w-20 flex-col justify-between"></div>
      </div>
    </section>

    <!-- Right panels -->
    <aside class="w-[530px] shrink-0 border-l-4 border-[#333] bg-[#404040]">
      <div class="flex h-11 border-b-2 border-[#1c1c1c] bg-[#2f2f2f] pt-1 text-[#7d7d7d] *:flex *:items-center">
        <span class="w-9 justify-center"><svg class="h-[18px] w-2.5"><use href="#grip"/></svg></span>
        <button class="w-[74px] justify-center">Farbe</button>
        <button class="w-[114px] justify-center bg-[#404040] font-semibold text-[#eee]">Hyperlinks</button>
        <button class="w-[116px] justify-center">Farbfelder</button><span class="text-[#5a5a5a]">|</span><button class="w-[74px] justify-center">Kontur</button>
      </div>
      <div class="flex flex-col gap-[6px] px-[5px] pt-[10px] pb-2">
        <div class="relative"><select aria-label="Seitenfilter" class="h-[38px] w-full appearance-none rounded-sm border-2 border-[#272727] bg-[#3f3f3f] px-2 shadow-[0_2px_0_#555]"><option>Alle Layoutseiten</option></select><svg class="pointer-events-none absolute top-2 right-3 h-[22px] w-2.5 text-[#ccc]"><use href="#updown"/></svg></div>
        <div class="relative"><select aria-label="Typfilter" class="h-[38px] w-full appearance-none rounded-sm border-2 border-[#272727] bg-[#3f3f3f] px-2 shadow-[0_2px_0_#555]"><option>Alle Typen</option></select><svg class="pointer-events-none absolute top-2 right-3 h-[22px] w-2.5 text-[#ccc]"><use href="#updown"/></svg></div>
      </div>
      <div class="h-[420px] overflow-hidden bg-[#333]">
        <table class="w-full border-collapse">
          <thead><tr class="h-[57px] bg-[#282828]"><th class="pl-[10px] text-left font-medium">Name</th><th class="w-14"><svg class="ml-4 h-3 w-3" viewBox="0 0 12 12"><path d="m4 9 5-5" stroke="#eee" stroke-width="2"/></svg></th></tr></thead>
          <tbody id="links"></tbody>
        </table>
      </div>
      <div class="flex h-[52px] items-center border-b-4 border-[#333] px-[6px] text-[#6c6c6c]">
        <button aria-label="Liste"><svg class="h-8 w-8" viewBox="0 0 32 32" fill="none" stroke="currentColor"><circle cx="16" cy="16" r="15" stroke-width="1.500"/><path d="M8 11h16M8 15h16M8 19h16" stroke="#999" stroke-width="1.800"/></svg></button>
        <button aria-label="Ziel" class="ml-2"><svg class="h-8 w-8" viewBox="0 0 32 32" fill="none" stroke="currentColor"><circle cx="16" cy="16" r="15" stroke-width="1.500"/><circle cx="16" cy="16" r="8" stroke="#999" stroke-width="1.800"/><path d="M16 6v7M16 19v7M6 16h7M19 16h7" stroke="#999" stroke-width="3"/></svg></button>
        <button aria-label="Neu" class="ml-auto"><svg class="h-7 w-[22px]"><use href="#page"/></svg></button>
        <button aria-label="Löschen" class="mr-[6px] ml-[18px]"><svg class="h-7 w-5"><use href="#trash"/></svg></button>
      </div>

      <div class="flex h-11 border-b-2 border-[#1c1c1c] bg-[#2f2f2f] pt-1 text-[#7d7d7d] *:flex *:items-center">
        <span class="w-[38px] justify-center"><svg class="h-[18px] w-2.5"><use href="#grip"/></svg></span>
        <button class="w-[84px] justify-center bg-[#404040] font-semibold text-[#eee]">Ebenen</button>
        <button class="w-[94px] justify-center">Zeichen</button><span class="text-[#5a5a5a]">|</span>
        <button class="w-[74px] justify-center">Absatz</button><span class="text-[#5a5a5a]">|</span>
        <button class="w-[94px] justify-center">Textstile</button>
        <button aria-label="Menü" class="ml-auto pr-1"><svg class="h-5 w-7"><use href="#menu"/></svg></button>
      </div>
      <div class="flex h-[59px] items-center border-b-2 border-[#262626] pr-4 pl-[10px]">
        <label for="opacity" class="w-[110px]">Deckkraft:</label>
        <div class="relative"><input id="opacity" value="100 %" class="h-10 w-[97px] rounded-md border-2 border-[#272727] bg-[#343434] pl-1 text-[#858585] shadow-[0_2px_0_#555]"><svg class="absolute top-4 right-2 h-2 w-2.5 text-[#999]"><use href="#down"/></svg></div>
        <div class="relative mr-2 ml-[6px] flex-1"><select aria-label="Mischmodus" class="h-[38px] w-full appearance-none rounded-sm border-2 border-[#272727] bg-[#3f3f3f] px-2 text-[#7d7d7d] shadow-[0_2px_0_#555]"><option>Normal</option></select><svg class="pointer-events-none absolute top-2 right-3 h-[22px] w-2.5 text-[#999]"><use href="#updown"/></svg></div>
        <button aria-label="Optionen"><svg class="h-6 w-6" viewBox="0 0 24 24"><circle cx="12" cy="12" r="6.500" fill="none" stroke="#b5b5b5" stroke-width="5"/><circle cx="12" cy="12" r="10" fill="none" stroke="#b5b5b5" stroke-width="4" stroke-dasharray="4 3.850"/></svg></button>
        <button aria-label="Sperren" class="ml-5"><svg class="h-6 w-[18px]" viewBox="0 0 18 24"><path d="M0 11h18v13H0z" fill="#b5b5b5"/><path d="M4 11V6q0-4 5-4t5 4v5" fill="none" stroke="#b5b5b5" stroke-width="2.500"/></svg></button>
      </div>
      <div class="h-[384px] border-b-2 border-[#262626] bg-[#333] pr-7">
        <div class="h-full bg-[#2d2d2d]">
          <div class="flex h-[66px] items-center border-b-2 border-[#242424] bg-[#3a3a3a]">
            <span class="h-full w-1 bg-linear-to-b from-[#5a3a2a] to-[#ff6d22]"></span>
            <button aria-label="Aufklappen" class="ml-[5px] flex h-7 w-7 items-center justify-center rounded-full bg-[#2a2a2a]"><svg class="h-4 w-4" viewBox="0 0 16 16"><path d="M2 0v16l13-8z" fill="#bbb"/></svg></button>
            <span class="ml-[5px] flex h-[60px] w-[60px] items-center justify-center border-2 border-black bg-[#2a2a2a]"><svg class="h-[42px] w-14"><use href="#thumb"/></svg></span>
            <label for="layer" class="ml-3 text-[#9a9a9a]">(Tagesansicht)</label>
            <span class="relative mr-9 ml-auto flex"><input id="layer" type="checkbox" checked class="peer h-[26px] w-[26px] appearance-none rounded-md border-2 border-[#222] bg-linear-to-b from-[#474747] to-[#2d2d2d]"><svg class="pointer-events-none absolute top-1 left-[5px] hidden h-[18px] w-4 peer-checked:block"><use href="#tick"/></svg></span>
          </div>
        </div>
      </div>
      <div class="flex h-[50px] items-center border-b-4 border-[#333] px-[9px] text-[#adadad]">
        <button aria-label="Ebenen" class="flex h-10 w-[42px] items-center justify-center bg-[#333]"><svg class="h-6 w-8" viewBox="0 0 32 24"><path d="M0 0h32v3L16 10 0 3zM0 6l16 7 16-7v4L16 17 0 10zM0 13l16 7 16-7v4l-16 7-16-7z" fill="#adadad"/></svg></button>
        <button aria-label="Maske" class="ml-[115px]"><svg class="h-6 w-7" viewBox="0 0 28 24"><path d="M0 0h28v24H0z" fill="#adadad"/><circle cx="14" cy="12" r="8" fill="#404040"/></svg></button>
        <button aria-label="Anpassung" class="ml-5"><svg class="h-6 w-6" viewBox="0 0 24 24"><circle cx="12" cy="12" r="11" fill="none" stroke="#adadad" stroke-width="2"/><path d="M19 5A10 10 0 0 0 4 19z" fill="#adadad"/></svg></button>
        <button aria-label="Effekte" class="ml-5 font-['Liberation_Serif',serif] text-[30px] italic">fx</button>
        <button aria-label="Neue Ebene" class="ml-auto"><svg class="h-7 w-[22px]"><use href="#page"/></svg></button>
        <button aria-label="Löschen" class="mr-2 ml-6"><svg class="h-[26px] w-[18px]"><use href="#trash"/></svg></button>
      </div>

      <div class="flex h-11 border-b-2 border-[#1c1c1c] bg-[#2f2f2f] pt-1 text-[#7d7d7d] *:flex *:items-center">
        <span class="w-[38px] justify-center"><svg class="h-[18px] w-2.5"><use href="#grip"/></svg></span>
        <button class="w-[158px] justify-center bg-[#404040] font-semibold text-[#eee]">Transformieren</button>
        <button class="w-[110px] justify-center">Navigator</button><span class="text-[#5a5a5a]">|</span><button class="w-[94px] justify-center">Protokoll</button>
      </div>
      <div class="flex h-[198px] pt-5 pl-[36px]">
        <svg class="mt-5 h-[78px] w-[78px]" viewBox="0 0 78 78"><rect x="6" y="6" width="66" height="66" fill="#6b6b6b"/><path d="M0 0h11v11H0zM33 0h11v11H33zM67 0h11v11H67zM0 33h11v11H0zM33 33h11v11H33zM67 33h11v11H67zM0 67h11v11H0zM33 67h11v11H33zM67 67h11v11H67z" fill="#585858"/></svg>
        <div id="transform" class="ml-5 grid grid-cols-[40px_120px_48px_120px] content-start items-center gap-y-[7px]"></div>
        <button aria-label="Verknüpfen" class="ml-5 flex h-[86px] items-center"><svg class="h-8 w-3" viewBox="0 0 12 32" fill="none" stroke="#909090" stroke-width="2"><rect x="2" y="1" width="8" height="12" rx="4"/><rect x="2" y="19" width="8" height="12" rx="4"/><path d="M6 9v14" stroke-width="3"/></svg></button>
      </div>
    </aside>
  </div>

  <!-- Status bar -->
  <footer class="flex h-10 items-center bg-[#303030] pl-[22px] text-[#b4b4b4]">
    <button aria-label="Erste"><svg class="h-5 w-5" viewBox="0 0 20 20" fill="#e4e4e4"><path d="M0 1h2v18H0zM20 1v18L5 10z"/></svg></button>
    <button aria-label="Zurück" class="ml-[18px]"><svg class="h-5 w-4" viewBox="0 0 16 20" fill="#e4e4e4"><path d="M16 1v18L0 10z"/></svg></button>
    <span class="w-[216px] pl-1 text-center">279 von 279</span>
    <button aria-label="Weiter"><svg class="h-5 w-4" viewBox="0 0 16 20" fill="#e4e4e4"><path d="M0 1v18l16-9z"/></svg></button>
    <button aria-label="Letzte" class="ml-[18px]"><svg class="h-5 w-5" viewBox="0 0 20 20" fill="#7a7a7a"><path d="M0 1v18l15-9zM18 1h2v18h-2z"/></svg></button>
    <svg class="ml-[18px] h-7 w-6" viewBox="0 0 24 28" fill="none"><path d="M5 27h18V5" stroke="#888" stroke-width="2"/><path d="M1 1h18v22H1z" stroke="#eee" stroke-width="2"/><path d="M4 6h12" stroke="#eee" stroke-width="3"/><path d="M4 11h12M4 14h12M4 17h12" stroke="#ccc" stroke-width="1.500"/></svg>
    <svg class="ml-7 h-6 w-6" viewBox="0 0 24 24"><path d="M4 20V10q0-9 8-9t8 9v10z" fill="#e6cf57"/><path d="M0 20h24v3H0z" fill="#888"/></svg>
    <p class="ml-7 whitespace-nowrap"><b class="text-[#eee]">Ziehen</b> = Per Auswahlrahmen markieren. <b class="text-white">Klick</b> auf Objekt = Objekt auswählen.</p>
  </footer>
</main>

<!-- Lower edge of the window behind -->
<div class="relative mr-[5%] ml-[29%] h-1 rounded-b-sm bg-[#7a7875]"></div>

<!-- Dock -->
<div class="relative mx-auto mt-px mb-[10px] flex w-max rounded-[36px] bg-[linear-gradient(to_bottom,#ffffff00,#fff8d066),linear-gradient(to_right,#e8dd86,#f6df7c_22%,#e8d99d_38%,#ead9a0_52%,#e4dac0_65%,#e9dcb0_82%,#f0d98c)] px-[6px] shadow-[inset_0_2px_2px_#fff6,0_2px_4px_#0003]">
  <ul id="dock" class="flex h-[126px] items-start"></ul>
</div>

<!-- Settings dialog -->
<section role="dialog" aria-label="Einstellungen" class="absolute top-[260px] left-1/2 w-[1342px] -translate-x-[670px] overflow-hidden rounded-[20px] border-2 border-t-[#858585] border-[#636363] bg-[#333] shadow-[0_0_0_1px_#000,0_40px_90px_#000000a6]">
  <div class="relative flex h-[54px] items-center gap-4 pl-[14px]">
    <button aria-label="Fenster schließen" class="h-6 w-6 rounded-full bg-[#ed6a5e]"></button><button aria-label="Minimieren" class="h-6 w-6 rounded-full bg-[#f5bf4f]"></button><span class="h-6 w-6 rounded-full bg-[#555]"></span>
    <h1 class="absolute inset-x-0 text-center text-[22px] font-medium">Einstellungen</h1>
  </div>
  <div class="flex h-[60px] items-center border-b-2 border-[#1d1d1d] bg-[#2a2a2a] pr-[35px] pl-[38px]">
    <div class="flex *:flex *:h-10 *:w-[58px] *:items-center *:justify-center *:rounded-sm *:border-2 *:border-[#232323] *:bg-[#3d3d3d]">
      <button aria-label="Zurück"><svg class="h-5 w-5" viewBox="0 0 20 20"><path d="M19 1 2 10l17 9" fill="none" stroke="#b5b5b5" stroke-width="2"/></svg></button>
      <button aria-label="Vor"><svg class="h-5 w-5" viewBox="0 0 20 20"><path d="m1 1 17 9-17 9" fill="none" stroke="#666" stroke-width="1.500"/></svg></button>
    </div>
    <div class="ml-7 flex *:flex *:h-10 *:items-center *:justify-center *:rounded-sm *:border-2 *:border-[#232323] *:bg-[#3d3d3d]">
      <button aria-label="Übersicht" class="w-[58px]"><svg class="h-6 w-8" viewBox="0 0 32 24"><path d="M0 4h32M0 12h32M0 20h32" stroke="#b5b5b5" stroke-width="5" stroke-dasharray="5 4"/></svg></button>
      <button aria-label="Bereiche" class="w-[30px] text-[#ddd]"><svg class="h-2.5 w-3"><use href="#down"/></svg></button>
    </div>
    <h2 class="ml-7 font-medium">Performance</h2>
    <div class="relative ml-auto"><input type="search" aria-label="Suchen" class="h-9 w-[346px] rounded-sm border-2 border-[#242424] bg-[#333] pl-9"><svg class="absolute top-2 left-3 h-5 w-5" viewBox="0 0 20 20" fill="none" stroke="#bbb" stroke-width="1.600"><circle cx="8" cy="8" r="6.500"/><path d="m13 13 6 6"/></svg></div>
  </div>

  <form class="pt-9 pb-5">
    <div class="grid grid-cols-[465px_1fr] items-center gap-x-[15px] [&>label]:text-right [&>span]:text-right">
      <label for="ram">Max. RAM-Nutzung:</label>
      <div class="flex h-[52px] items-center pl-0.5">
        <div class="relative h-5 w-[581px]"><div class="absolute inset-x-0 top-[5px] h-[10px] rounded-full border-t-2 border-b-2 border-t-[#222] border-b-[#4a4a4a] bg-[#333]"><div class="h-full rounded-l-full bg-[#5f7ca8]" style="width:12.500%"></div></div><input id="ram" type="range" min="1" max="64" value="8" class="absolute inset-0 w-full appearance-none bg-transparent [&::-webkit-slider-thumb]:h-[19px] [&::-webkit-slider-thumb]:w-5 [&::-webkit-slider-thumb]:appearance-none [&::-webkit-slider-thumb]:bg-[#f4f4f4] [&::-webkit-slider-thumb]:[clip-path:polygon(0_0,100%_0,100%_65%,50%_100%,0_65%)]"><div class="ticks absolute inset-x-[10px] top-[24px] flex justify-between"></div></div>
        <input aria-label="RAM-Wert" value="8192 MB" class="mt-1 ml-3 h-[38px] w-[119px] rounded-md border-2 border-[#262626] bg-[#2f2f2f] pl-1 shadow-[0_2px_0_#4a4a4a]">
      </div>
      <label for="disk">Warnung zur Festplattennutzung bei:</label>
      <div class="flex h-[52px] items-center pl-0.5">
        <div class="relative h-5 w-[581px]"><div class="absolute inset-x-0 top-[5px] h-[10px] rounded-full border-t-2 border-b-2 border-t-[#222] border-b-[#4a4a4a] bg-[#333]"><div class="h-full rounded-l-full bg-[#5f7ca8]" style="width:49%"></div></div><input id="disk" type="range" min="1" max="64" value="32" class="absolute inset-0 w-full appearance-none bg-transparent [&::-webkit-slider-thumb]:h-[19px] [&::-webkit-slider-thumb]:w-5 [&::-webkit-slider-thumb]:appearance-none [&::-webkit-slider-thumb]:bg-[#f4f4f4] [&::-webkit-slider-thumb]:[clip-path:polygon(0_0,100%_0,100%_65%,50%_100%,0_65%)]"><div class="ticks absolute inset-x-[10px] top-[24px] flex justify-between"></div></div>
        <input aria-label="Festplattenwert" value="32768 MB" class="mt-1 ml-3 h-[38px] w-[119px] rounded-md border-2 border-[#262626] bg-[#2f2f2f] pl-1 shadow-[0_2px_0_#4a4a4a]">
      </div>
      <label for="undo">Rückgängig-Limit:</label>
      <div class="flex h-[52px] items-center pl-0.5">
        <div class="relative h-5 w-[597px]"><div class="absolute inset-x-0 top-[5px] h-[10px] rounded-full border-t-2 border-b-2 border-t-[#222] border-b-[#4a4a4a] bg-[#333]"><div class="h-full rounded-l-full bg-[#5f7ca8]" style="width:13.500%"></div></div><input id="undo" type="range" min="0" max="8192" value="1010" class="absolute inset-0 w-full appearance-none bg-transparent [&::-webkit-slider-thumb]:h-[19px] [&::-webkit-slider-thumb]:w-5 [&::-webkit-slider-thumb]:appearance-none [&::-webkit-slider-thumb]:bg-[#f4f4f4] [&::-webkit-slider-thumb]:[clip-path:polygon(0_0,100%_0,100%_65%,50%_100%,0_65%)]"><div class="absolute inset-x-0 top-[24px] flex *:h-[6px] *:w-0.5 *:bg-[#6f6f6f]"><span class="ml-20"></span><span class="ml-[72px]"></span><span class="ml-[214px]"></span></div></div>
        <input aria-label="Rückgängig-Wert" value="1024" class="mt-1 ml-3 h-[38px] w-[103px] rounded-md border-2 border-[#262626] bg-[#2f2f2f] pl-1 shadow-[0_2px_0_#4a4a4a]">
      </div>
      <label for="quality">Ansichtsqualität:</label>
      <div class="flex h-[52px] items-center pt-1"><div class="relative w-[425px]"><select id="quality" class="h-[38px] w-full appearance-none rounded-sm border-2 border-[#262626] bg-[#3f3f3f] px-2 shadow-[0_2px_0_#4a4a4a]"><option>Bilinear (Höchste Qualität)</option></select><svg class="pointer-events-none absolute top-2 right-[11px] h-[22px] w-2.5 text-[#ccc]"><use href="#updown"/></svg></div></div>
      <span></span>
      <label class="flex h-9 items-center gap-[6px]"><span class="relative flex"><input type="checkbox" checked class="peer h-6 w-6 appearance-none rounded-md border-2 border-[#232323] bg-linear-to-b from-[#454545] to-[#2e2e2e]"><svg class="pointer-events-none absolute top-[3px] left-1 hidden h-[18px] w-4 peer-checked:block"><use href="#tick"/></svg></span>Verläufe per Dithering verarbeiten</label>
      <span></span>
      <label class="flex h-9 items-center gap-[6px]"><input type="checkbox" class="h-6 w-6 appearance-none rounded-md border-2 border-[#272727] bg-[#363636]">Präzise Zuschnitte verwenden</label>
      <label for="interval">Intervall für Dateiwiederherstellung:</label>
      <div class="flex h-[60px] items-center gap-[10px]"><div class="relative"><input id="interval" value="300" class="h-[38px] w-[120px] rounded-md border-2 border-[#262626] bg-[#2f2f2f] pl-1 shadow-[0_2px_0_#4a4a4a]"><svg class="absolute top-[14px] right-2 h-2.5 w-2.5 text-[#ccc]"><use href="#down"/></svg></div>Sekunden</div>
      <label for="display">Darstellung:</label>
      <div class="flex h-[42px] items-center gap-[18px] pt-1"><div class="relative w-[425px]"><select id="display" disabled class="h-[38px] w-full appearance-none rounded-sm border-2 border-[#262626] bg-[#373737] px-2 text-[#8a8a8a] shadow-[0_2px_0_#484848]"><option>Metall</option></select><svg class="pointer-events-none absolute top-2 right-[11px] h-[22px] w-2.5 text-[#888]"><use href="#updown"/></svg></div>(Neustart erforderlich)</div>
      <span></span>
      <label class="flex h-9 items-center gap-[6px] pt-0.5"><input type="checkbox" class="h-6 w-6 appearance-none rounded-md border-2 border-[#272727] bg-[#363636]">Nur integrierte GPU verwenden (Neustart erforderlich)</label>
      <label for="retina">Retina-Rendering:</label>
      <div class="flex h-[68px] items-center pt-1"><div class="relative w-[425px]"><select id="retina" class="h-[38px] w-full appearance-none rounded-sm border-2 border-[#262626] bg-[#3f3f3f] px-2 shadow-[0_2px_0_#4a4a4a]"><option>Automatisch (Bestes)</option></select><svg class="pointer-events-none absolute top-2 right-[11px] h-[22px] w-2.5 text-[#ccc]"><use href="#updown"/></svg></div></div>
      <label for="hw">Hardware-Beschleunigung:</label>
      <label class="flex h-14 items-center gap-[6px]"><span class="relative flex"><input id="hw" type="checkbox" checked class="peer h-6 w-6 appearance-none rounded-md border-2 border-[#232323] bg-linear-to-b from-[#454545] to-[#2e2e2e]"><svg class="pointer-events-none absolute top-[3px] left-1 hidden h-[18px] w-4 peer-checked:block"><use href="#tick"/></svg></span>Metal-Beschleunigung für Berechnungen aktivieren</label>
      <span></span>
      <div class="flex h-[54px] items-start justify-between pr-[37px] pl-[38px]"><span>Apple M1 (Metal)</span><button type="button" class="mt-3 h-[42px] w-[146px] rounded-md border-2 border-[#262626] bg-[#404040] shadow-[0_2px_0_#484848,inset_0_2px_0_#4b4b4b]">Schließen</button></div>
    </div>
  </form>
</section>

<script>
const fill = (id, html) => { document.getElementById(id).innerHTML = html; };
const row = (name, active) => `<li class="flex h-[60px] items-center pl-[6px]"><span class="flex h-[58px] w-[75px] items-center justify-center rounded-lg ${active ? 'bg-[#858585]' : ''}"><svg class="h-11 w-[59px]"><use href="#thumb"/></svg></span><span class="ml-2">${name}</span></li>`;
fill('masters', ['MASTER A','Monatsübersicht','Monatsplanung','Monatsreflektion','Wochenübersicht','Wochenplanung'].map(n => row(n)).join(''));
fill('pages', Array.from({length: 15}, (_, i) => row('Seite ' + (265 + i), i === 14)).join(''));
fill('hours', Array.from({length: 16}, (_, i) => `<div class="flex items-center border-b border-[#bbb] pl-[6px] text-[15px]"><span class="w-6">${6 + i}</span><span class="flex-1 border-b border-dotted border-[#bbb]"></span></div>`).join(''));
fill('todos', Array.from({length: 8}, () => `<div class="flex h-[38px] items-center border-b border-[#bbb]"><span class="h-5 w-5 rounded-full border border-[#888]"></span></div>`).join(''));
fill('drops', Array.from({length: 10}, () => `<svg class="h-7 w-[19px]" viewBox="0 0 19 28"><path d="M9.500 1Q17 12 17 19a7.500 7.500 0 0 1-15 0Q2 12 9.500 1" fill="none" stroke="#bbb" stroke-width="1.300"/></svg>`).join(''));
fill('tabs', ['JAHR','JAN','FEB','MÄR','APR','MAI','JUN','JUL','AUG','SEP','OKT','NOV','DEZ'].map((t, i) => `<div class="flex items-center justify-center rounded-r-sm bg-[#f4bba5] text-[19px] shadow-[2px_3px_5px_#00000080] ${i ? 'flex-1' : 'h-[105px]'}"><span class="[writing-mode:vertical-rl]">${t}</span></div>`).join(''));
fill('rings', Array.from({length: 12}, () => `<svg class="h-[39px] w-20" viewBox="0 0 80 39"><ellipse cx="9" cy="20" rx="9" ry="9" fill="#222629"/><ellipse cx="71" cy="20" rx="9" ry="9" fill="#222629"/><rect x="4" y="13.500" width="72" height="13" rx="5" fill="url(#gold)"/></svg>`).join(''));
fill('links', ['1','2','3','7','10','11','12'].map((n, i) => `<tr class="h-[54px] ${i % 2 ? 'bg-[#383838]' : 'bg-[#353535]'}"><td class="border-b border-[#313131] pl-4"><a href="#">Hyperlink ${n}</a></td><td class="border-b border-[#313131] pl-[17px] text-[#eee]"><svg class="h-7 w-[22px]"><use href="#page"/></svg></td></tr>`).join(''));
document.querySelectorAll('.ticks').forEach(t => { t.innerHTML = Array.from({length: 64}, () => '<span class="h-[6px] w-0.5 bg-[#6f6f6f]"></span>').join(''); });
fill('transform', [['X','0 pt'],['B','0 pt'],['Y','0 pt'],['H','0 pt'],['R','0 °'],['N','0 °']].map(([l, v], i) => `<label for="t${l}" class="pr-[7px] text-right ${i > 3 ? 'mt-[19px]' : ''}">${l}:</label><span class="relative flex ${i > 3 ? 'mt-[19px]' : ''}"><input id="t${l}" value="${v}" class="h-[38px] w-[120px] rounded-md border-2 border-[#272727] bg-[#343434] pl-1 text-[#858585] shadow-[0_2px_0_#555]">${i > 3 ? '<svg class="absolute top-[15px] right-2 h-2 w-2.5 text-[#8c8c8c]"><use href="#down"/></svg>' : ''}</span>`).join(''));

const G = (id, a, b) => `<linearGradient id="${id}" x1="0" y1="0" x2="0" y2="1"><stop offset="0" stop-color="${a}"/><stop offset="1" stop-color="${b}"/></linearGradient>`;
const bg = (id, a, b) => G(id, a, b) + `<rect width="78" height="78" rx="18" fill="url(#${id})"/>`;
const petals = ['#f39a38','#f3df3e','#a6cf50','#6db777','#6ba6dc','#8d7cc6','#c07ab6','#ec6b5a'].map((c, i) => `<ellipse cx="39" cy="22" rx="11" ry="17" fill="${c}" opacity=".85" transform="rotate(${i * 45} 39 39)"/>`).join('');
const pad = ['#6ddc52','#f5b93a','#e88a35','#d13030','#999','#ec4f66','#8f45dd','#3f7df0','#5fc99a'].map((c, i) => `<rect x="${12 + (i % 3) * 19}" y="${13 + Math.floor(i / 3) * 19}" width="15" height="15" rx="4" fill="${c}"/>`).join('');
const apps = [
  ['Finder', 1, bg('f1','#5fc5f8','#3a72ee') + '<path d="M42 0h18a18 18 0 0 1 18 18v42a18 18 0 0 1-18 18H48q-3-14-3-32H33Q34 16 42 0" fill="#e4e7ee"/><path d="M21 22v8M58 22v8" stroke="#222" stroke-width="3"/><path d="M16 52q23 20 47 0" fill="none" stroke="#111" stroke-width="3"/>'],
  ['Aktivitätsanzeige', 1, '<rect width="78" height="78" rx="18" fill="#c9d4d8"/><rect x="2" y="3" width="74" height="72" rx="16" fill="#000"/><rect x="9" y="9" width="60" height="60" rx="10" fill="#1b2724"/><path d="M9 20h60M9 39h60M9 58h60M24 9v60M39 9v60M54 9v60" stroke="#34433f"/><path d="M9 42l6-4 4 6 2-5 1-27 4 42 3-16 6 7q6-16 10-14t6 15 5-8 7 4" fill="none" stroke="#7fd8c0" stroke-width="1.800"/>'],
  ['Launchpad', 0, '<rect width="78" height="78" rx="18" fill="#f3efd2"/>' + pad],
  ['Safari', 1, bg('f4','#ffffff','#d8d8da') + '<circle cx="39" cy="39" r="33" fill="#3f8fe6"/><circle cx="39" cy="39" r="29" fill="none" stroke="#cfe4fb" stroke-width="4" stroke-dasharray="1 2.800"/><path d="m62 18-28 17 10 8z" fill="#e8473c"/><path d="M16 60 34 35l10 8z" fill="#f2f2f2"/>'],
  ['Nachrichten', 0, bg('f5','#87ee7b','#4fbb42') + '<path d="M39 14c16 0 28 10 28 23S55 60 39 60q-3 0-6-1-4 4-10 4 3-4 2-7-14-7-14-19 0-23 28-23" fill="#f3f8f1"/>'],
  ['Mail', 0, bg('f6','#3a70ec','#5cc3fa') + '<rect x="12" y="21" width="54" height="36" rx="4" fill="#f1f1f3"/><path d="m13 23 26 23 26-23M13 56l20-19M65 56 45 37" fill="none" stroke="#a9adb5" stroke-width="1.800"/>'],
  ['Fotos', 0, '<rect width="78" height="78" rx="18" fill="#fdfdfd"/>' + petals],
  ['Erinnerungen', 0, bg('f8','#ffffff','#f1efed') + '<path d="M30 19h38M30 39h38M30 58h38" stroke="#bbb" stroke-width="2"/><g fill="none" stroke-width="5"><circle cx="15" cy="19" r="4" stroke="#3875ee"/><circle cx="15" cy="39" r="4" stroke="#e0463c"/><circle cx="15" cy="58" r="4" stroke="#e9902f"/></g>'],
  ['Notizen', 1, bg('f9','#f7f6f2','#e4e2dc') + '<path d="M0 20V18A18 18 0 0 1 18 0h42a18 18 0 0 1 18 18v2z" fill="#f8cf4b"/><path d="M0 21h78M0 39h78M0 58h78" stroke="#c9c7c2" stroke-width="1.500"/>'],
  ['Keynote', 1, bg('f10','#58baf8','#2f62e8') + '<rect x="19" y="11" width="39" height="18" rx="2" fill="#f8f8f8"/><path d="M17 29h44v5H17z" fill="#dfe3ea"/><circle cx="39" cy="19" r="7" fill="#6ec1ee"/><path d="M39 19v-7a7 7 0 0 1 5 12z" fill="#e9a43c"/><path d="M39 19v-7a7 7 0 0 0-5 12z" fill="#a24a8c"/><path d="M39 34v32" stroke="#cfdcef" stroke-width="2"/><path d="M27 66h24" stroke="#eee" stroke-width="4"/>'],
  ['Numbers', 1, bg('f11','#94ee70','#53c73e') + '<path d="M19 66V52M32 66V38M45 66V13M59 66V27" stroke="#fff" stroke-width="9"/>'],
  ['Pages', 0, bg('f12','#f5b450','#ee8b3a') + '<path d="m12 68 6-15 42-38q6-2 4 4L26 58z" fill="#f6f6f6" stroke="#9a6a36"/><path d="M28 67h38" stroke="#fbd2a8" stroke-width="3"/>'],
  ['App Store', 0, bg('f13','#4fb0f0','#2b60dd') + '<path d="m43 16-21 33M35 16l25 46M21 56l-3 5M15 48h48" stroke="#fff" stroke-width="7" stroke-linecap="round"/>'],
  ['Kalender', 0, bg('f14','#ffffff','#f2f2f2') + '<path d="M0 24v-6A18 18 0 0 1 18 0h42a18 18 0 0 1 18 18v6z" fill="#e35b4f"/><text x="39" y="19" text-anchor="middle" font-size="17" font-weight="600" fill="#fff">MÄR</text><text x="39" y="65" text-anchor="middle" font-size="46" font-weight="300" fill="#222">25</text>'],
  ['Systemeinstellungen', 0, bg('f15','#cfdbe2','#8d8d8d') + '<circle cx="39" cy="39" r="33" fill="#333"/><circle cx="39" cy="39" r="29" fill="none" stroke="#999" stroke-width="4" stroke-dasharray="2 2"/><circle cx="39" cy="39" r="21" fill="none" stroke="#888" stroke-width="5"/><path d="M39 39h22M39 39 28 20M39 39 28 58" stroke="#999" stroke-width="4"/><circle cx="39" cy="39" r="7" fill="#444" stroke="#999" stroke-width="2"/>'],
  ['WhatsApp', 0, bg('f16','#8ee77d','#4fc13c') + '<path d="m11 68 4-16a28 28 0 1 1 10 11z" fill="none" stroke="#fff" stroke-width="5"/><path d="M27 25q4-4 7 0l2 7-3 4q4 8 11 11l4-4 8 4q1 5-4 8-8 4-20-8t-8-18z" fill="#fff"/>'],
  ['Zoom', 0, '<rect x="-4" y="-4" width="86" height="86" rx="28" fill="#4a83f4"/><path d="M13 24h30q7 0 7 7v23H21q-8 0-8-8zM53 34l13-9v28l-13-9z" fill="#fff"/>'],
  ['GoodNotes', 0, bg('f18','#ffffff','#ececec') + '<path d="M17 21h42M17 33h38M17 45h33M17 60q6-9 11 0t12 0" stroke="#3fb3ea" stroke-width="3" fill="none"/><path d="m48 60 2-18L70 8q8-2 8 8L58 50z" fill="#222"/>'],
  ['Chrome', 1, '<rect width="78" height="78" rx="18" fill="#fbfbfb"/><circle cx="39" cy="39" r="32" fill="#f7cb4d"/><path d="M39 39 11 23a32 32 0 0 1 56 0z" fill="#d85140"/><path d="M11 23a32 32 0 0 0 26 48l14-25-12-7z" fill="#519f5c"/><path d="M39 23h28" stroke="#d85140" stroke-width="2"/><circle cx="39" cy="39" r="15" fill="#fff"/><circle cx="39" cy="39" r="12" fill="#4e86ee"/>'],
  ['Affinity Publisher', 1, '<clipPath id="pc"><rect width="78" height="78" rx="18"/></clipPath><g clip-path="url(#pc)"><use href="#publisher" width="78" height="78"/></g>'],
  null,
  ['Photoshop', 0, '<rect width="78" height="78" rx="16" fill="#071d33"/><text x="39" y="54" text-anchor="middle" font-size="42" font-weight="600" fill="#4aa3f5">Ps</text>'],
  ['Creative Cloud', 0, '<linearGradient id="cc" x1="0" y1="0" x2="1" y2="1"><stop offset="0" stop-color="#d83bd6"/><stop offset=".35" stop-color="#ec3a35"/><stop offset=".65" stop-color="#f1b33a"/><stop offset="1" stop-color="#6fd35b"/></linearGradient><rect width="78" height="78" rx="16" fill="url(#cc)"/><path d="M0 36v26q0 16 16 16h25Q26 54 0 36" fill="#5b6df0" opacity=".75"/><g fill="none" stroke="#fff" stroke-width="5"><path d="M52 58H29a17 17 0 1 1 4-33 18 18 0 1 1 19 33M38 50 28 41a5 5 0 0 1 8-7l12 13a6 6 0 0 0 8-8L44 27"/></g>'],
  ['InDesign', 0, '<rect width="78" height="78" rx="16" fill="#450a1d"/><text x="39" y="54" text-anchor="middle" font-size="44" font-weight="600" fill="#f0416d">Id</text>'],
  null,
  ['Downloads', 0, '<path d="M14-7h42v12h5v-3H12zM9-2h54v90H9z" fill="#f2f2f2" stroke="#ccc"/><path d="M12 5h48v80H12z" fill="#fff" stroke="#ddd"/><path d="M12 20h48v18H12z" fill="#a08a80"/><path d="M14 22h14v12H14zM34 22h12v14H34z" fill="#6b3f38"/><path d="M13 38h20v16H13z" fill="#c9a9a0"/><path d="M44 38h14v16H44z" fill="#444"/><text x="36" y="13" text-anchor="middle" font-size="5" fill="#4a6a5a">DEIN SUPERMARKT</text><path d="M36 50h14M38 56h12M38 62h14M40 68h10M40 74h12" stroke="#9bb5a3"/>'],
  ['Papierkorb', 0, G('f25','#dcdcdc','#cfcfcf') + '<path d="M5 3h66l-7 74q-1 8-9 8H22q-8 0-9-8z" fill="url(#f25)"/><path d="M5 8 14-3l8 4 6-7 10 6 9-5 7 5 12-2 5 10q-30 9-66 0" fill="#f3f3f3" stroke="#999"/><path d="M16 2 24 8M34 0l4 9M48-1l3 9" stroke="#346" stroke-width="3"/><path d="m20 22 6 50 12-20 8 24 8-56-14 16z" fill="#ececec" opacity=".7"/>']
];
fill('dock', apps.map((a, i) => a === null
  ? `<li class="flex pt-4 ${i === 20 ? 'w-[47px] pl-[26px]' : 'w-[50px] pl-[22px]'}"><span class="h-[94px] w-0.5 bg-[#b9aa80]"></span></li>`
  : `<li class="flex w-[104px] flex-col items-center pt-[19px]"><a href="#" aria-label="${a[0]}"><svg class="block h-[78px] w-[78px] overflow-visible drop-shadow-[0_2px_2px_#0005]" viewBox="0 0 78 78">${a[2]}</svg></a>${a[1] ? '<span class="mt-[17px] h-2 w-2 rounded-full bg-[#75683a]"></span>' : ''}</li>`).join(''));
</script>
</body>
</html>
